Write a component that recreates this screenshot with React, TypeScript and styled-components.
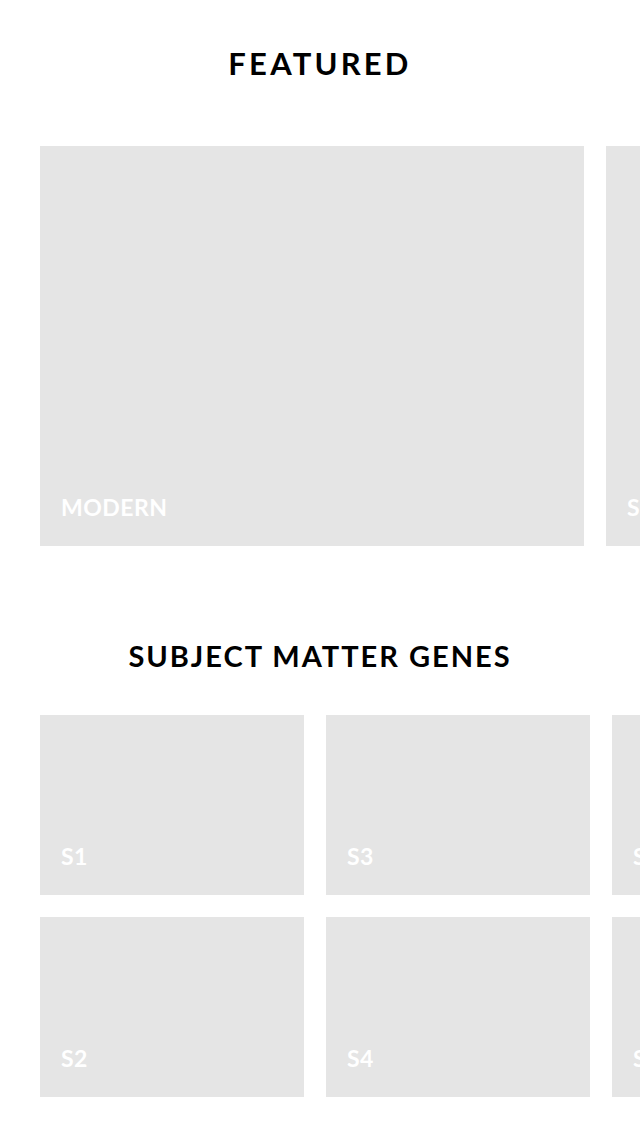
import React from 'react';
import styled, { createGlobalStyle } from 'styled-components';

const GlobalStyle = createGlobalStyle`
  html, body {
    margin: 0;
    padding: 0;
    background: #ffffff;
  }
  body {
    font-family: Lato, "Liberation Sans", Arial, sans-serif;
  }
`;

const Page = styled.div`
  width: 640px;
  overflow: hidden;
  padding: 48px 0 40px;
`;

const Section = styled.section<{ $gap: number }>`
  display: flex;
  flex-direction: column;
  gap: ${(p) => p.$gap}px;
  & + & {
    margin-top: 95px;
  }
`;

const Title = styled.h2<{ $size: number; $spacing: number }>`
  margin: 0;
  text-align: center;
  font-size: ${(p) => p.$size}px;
  line-height: 1;
  font-weight: 700;
  letter-spacing: ${(p) => p.$spacing}px;
  color: #000000;
`;

const Row = styled.div`
  display: flex;
  gap: 22px;
  padding-left: 40px;
`;

const Grid = styled.div`
  display: grid;
  grid-template-rows: repeat(2, 180px);
  grid-auto-flow: column;
  grid-auto-columns: 264px;
  gap: 22px;
  padding-left: 40px;
`;

const Card = styled.div<{ $width?: number; $height?: number }>`
  flex: 0 0 ${(p) => (p.$width ? `${p.$width}px` : 'auto')};
  height: ${(p) => (p.$height ? `${p.$height}px` : 'auto')};
  background: #e5e5e5;
  display: flex;
  align-items: flex-end;
  padding: 0 21px 27px;
  box-sizing: border-box;
`;

const Label = styled.span`
  color: #ffffff;
  font-size: 23px;
  line-height: 1;
  font-weight: 700;
  letter-spacing: 0.5px;
`;

const featured = ['MODERN', 'SURREALISM'];
const genes = ['S1', 'S2', 'S3', 'S4', 'S5', 'S6'];

export default function App() {
  return (
    <>
      <GlobalStyle />
      <Page>
        <Section $gap={67}>
          <Title $size={31} $spacing={3.2}>FEATURED</Title>
          <Row>
            {featured.map((name) => (
              <Card key={name} $width={544} $height={400}>
                <Label>{name}</Label>
              </Card>
            ))}
          </Row>
        </Section>
        <Section $gap={45}>
          <Title $size={29} $spacing={2}>SUBJECT MATTER GENES</Title>
          <Grid>
            {genes.map((name) => (
              <Card key={name}>
                <Label>{name}</Label>
              </Card>
            ))}
          </Grid>
        </Section>
      </Page>
    </>
  );
}
